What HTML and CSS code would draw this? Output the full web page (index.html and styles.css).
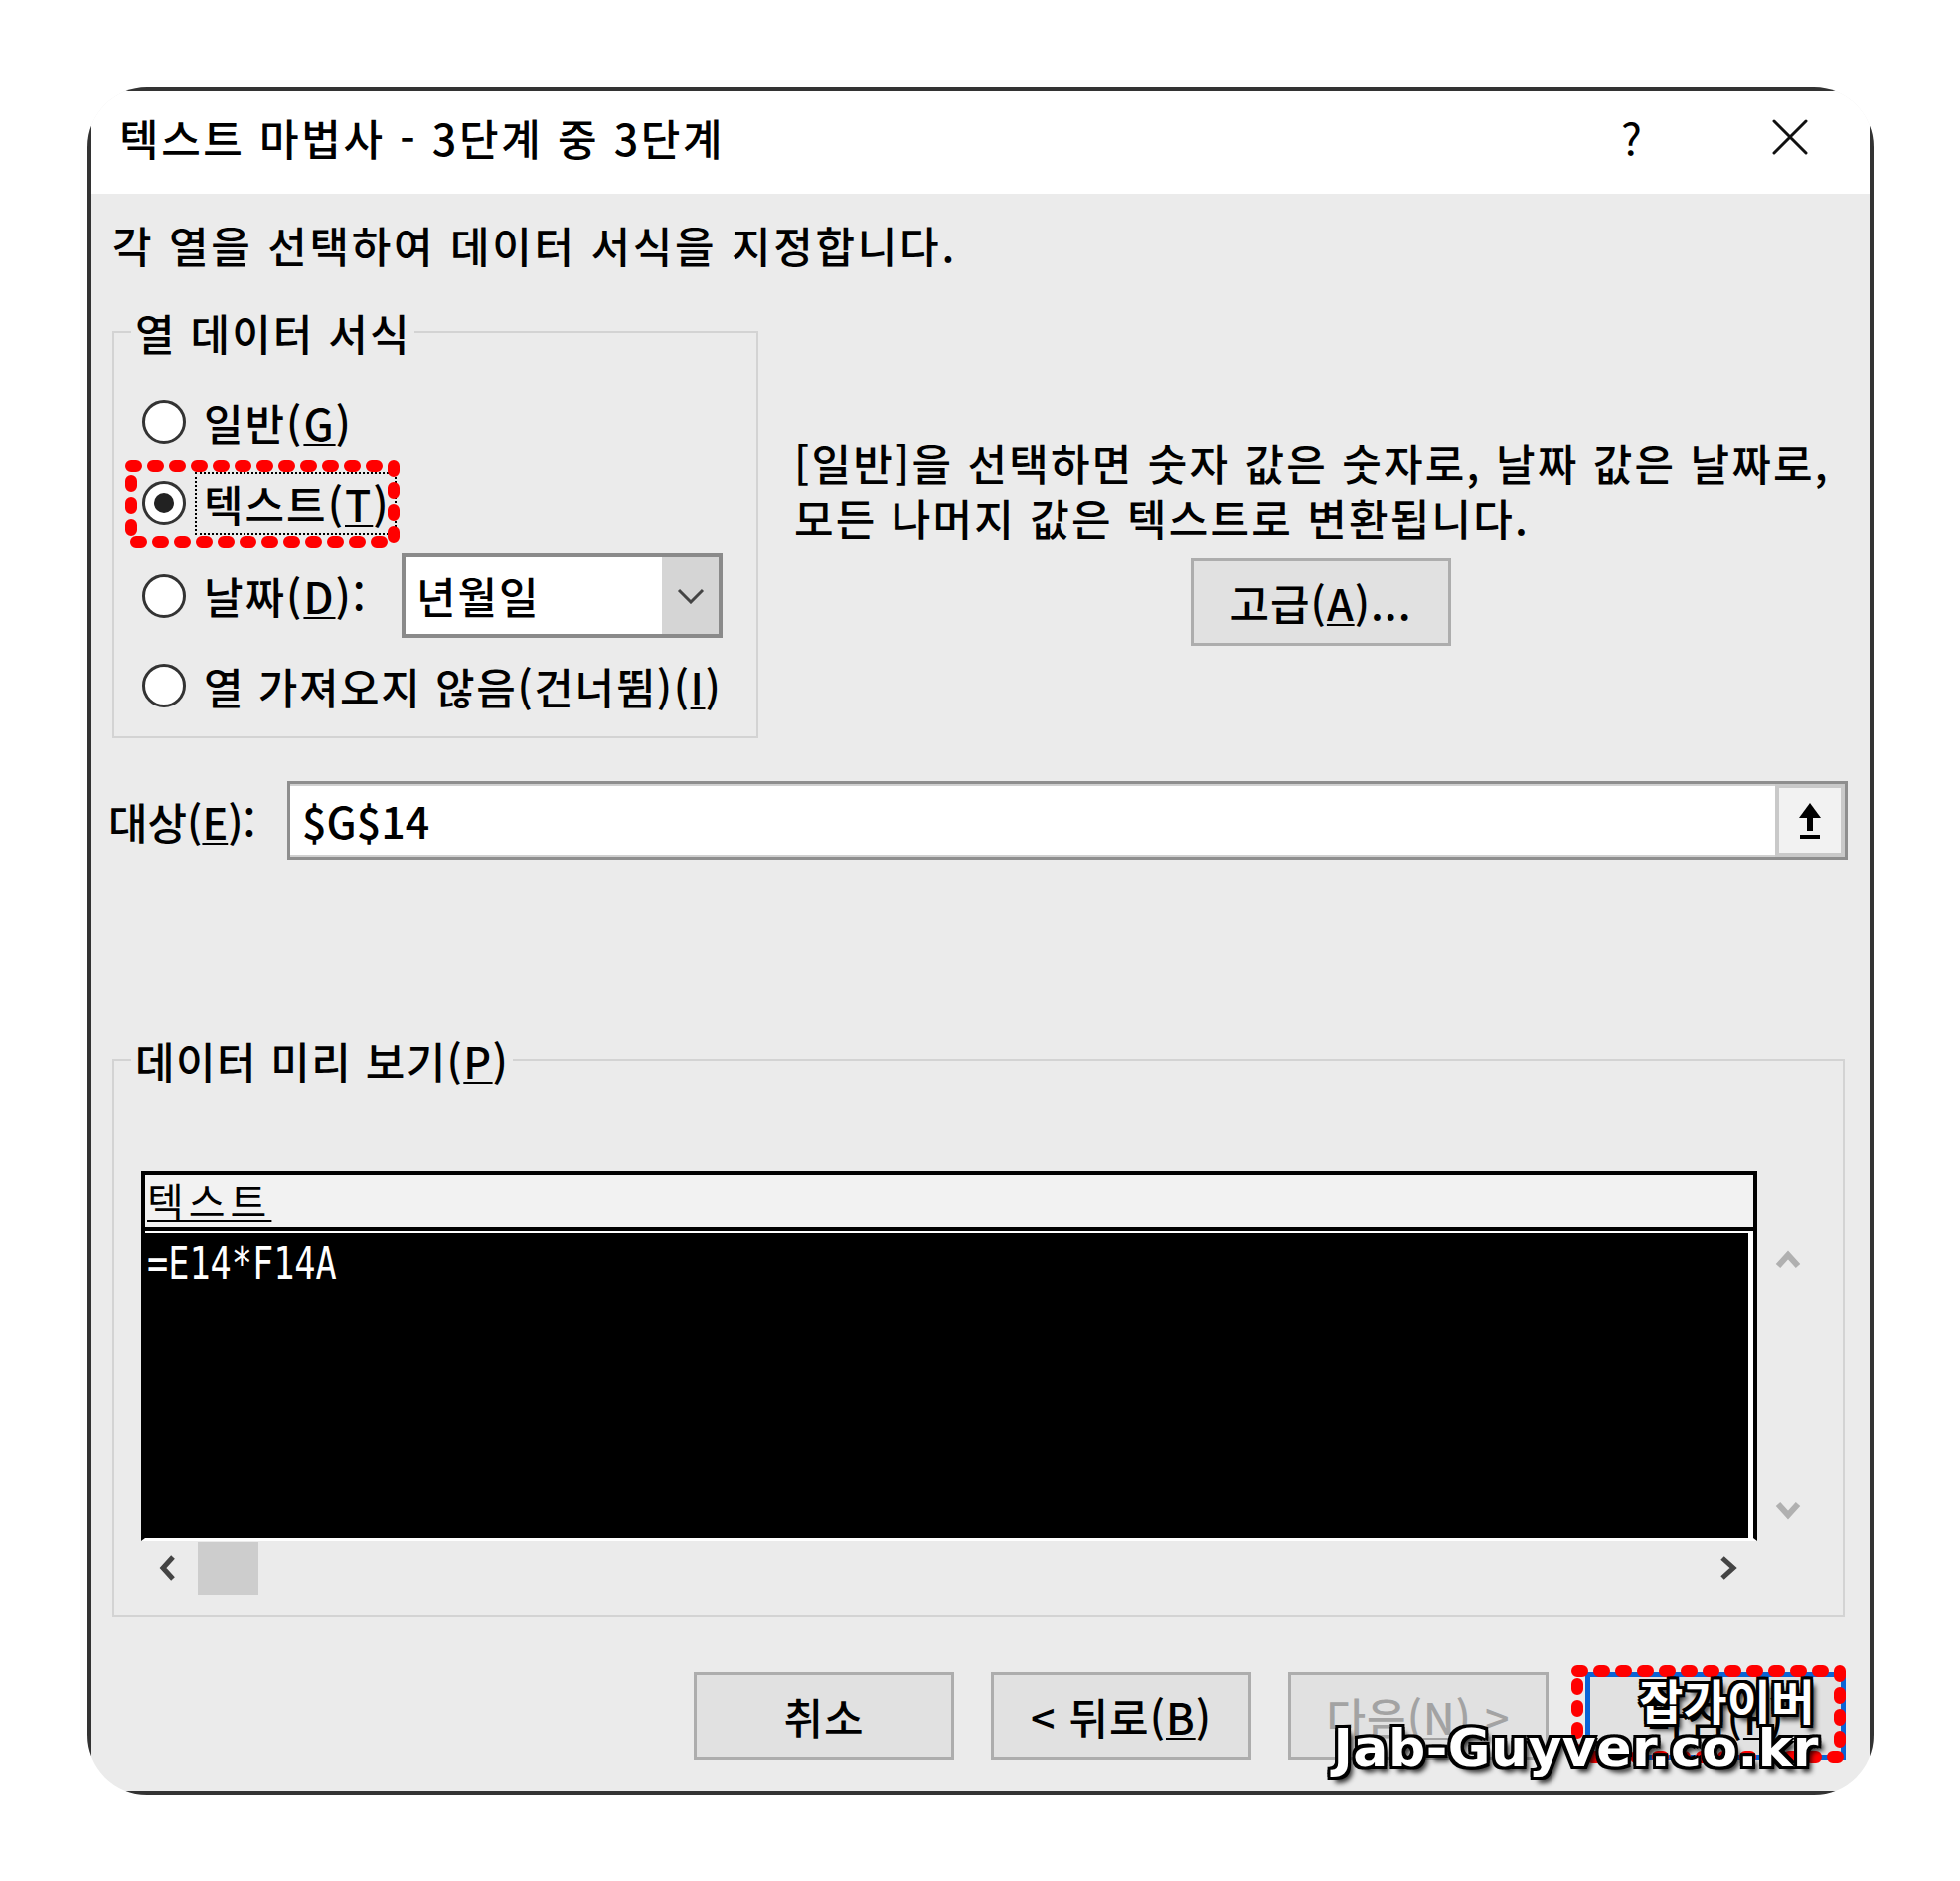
FILE: index.html
```html
<!DOCTYPE html>
<html lang="ko">
  <head>
    <meta charset="utf-8" />
    <title>텍스트 마법사 - 3단계 중 3단계</title>
    <link rel="stylesheet" href="styles.css">
  </head>
  <body>
    <div class="frame">
      <div class="window">
        <header class="titlebar">
          <span class="title">텍스트 마법사 - 3단계 중 3단계</span>
          <span class="help">?</span>
          <svg class="close" viewBox="0 0 36 36">
            <path d="M2 2L34 34M34 2L2 34" stroke="#111" stroke-width="3" stroke-linecap="round" />
          </svg>
        </header>

        <main class="content">
          <p class="intro">각 열을 선택하여 데이터 서식을 지정합니다.</p>

          <div class="format-row">
            <fieldset class="group format">
              <legend>열 데이터 서식</legend>
              <div class="option first">
                <span class="radio"></span>
                <span class="label">일반(<u>G</u>)</span>
              </div>
              <div class="option">
                <span class="radio on"></span>
                <span class="label focus">텍스트(<u>T</u>)</span>
                <svg class="mark" width="276" height="88" viewBox="0 0 276 88">
                  <rect x="6" y="6" width="264" height="76" />
                </svg>
              </div>
              <div class="option date">
                <span class="radio"></span>
                <span class="label">날짜(<u>D</u>):</span>
                <div class="combo">
                  <span class="combo-text">년월일</span>
                  <span class="combo-btn">
                    <svg width="28" height="16" viewBox="0 0 28 16">
                      <path d="M2 2L14 14L26 2" fill="none" stroke="#444" stroke-width="3" />
                    </svg>
                  </span>
                </div>
              </div>
              <div class="option skip">
                <span class="radio"></span>
                <span class="label">열 가져오지 않음(건너뜀)(<u>I</u>)</span>
              </div>
            </fieldset>

            <div class="info">
              <p class="desc">[일반]을 선택하면 숫자 값은 숫자로, 날짜 값은 날짜로,<br>모든 나머지 값은 텍스트로 변환됩니다.</p>
              <button class="btn advanced">고급(<u>A</u>)...</button>
            </div>
          </div>

          <div class="target-row">
            <span class="target-label">대상(<u>E</u>):</span>
            <div class="input">
              <span class="input-text">$G$14</span>
              <span class="pick">
                <svg width="26" height="40" viewBox="0 0 26 40">
                  <polygon points="13,2 2,17 24,17" fill="#000" />
                  <rect x="10" y="15" width="6" height="15" fill="#000" />
                  <rect x="3" y="34" width="20" height="4" fill="#000" />
                </svg>
              </span>
            </div>
          </div>

          <fieldset class="group preview">
            <legend>데이터 미리 보기(<u>P</u>)</legend>
            <div class="preview-grid">
              <div class="table">
                <div class="thead"><u>텍스트</u></div>
                <div class="tbody"><span class="cell">=E14*F14A</span></div>
              </div>
              <div class="vscroll">
                <svg width="26" height="20" viewBox="0 0 26 20">
                  <path d="M3 17L13 6L23 17" fill="none" stroke="#b0b0b0" stroke-width="6" />
                </svg>
                <svg width="26" height="20" viewBox="0 0 26 20">
                  <path d="M3 4L13 15L23 4" fill="none" stroke="#b0b0b0" stroke-width="6" />
                </svg>
              </div>
              <div class="hscroll">
                <svg width="24" height="26" viewBox="0 0 24 26">
                  <path d="M17 2L7 13L17 24" fill="none" stroke="#444" stroke-width="5" />
                </svg>
                <span class="thumb"></span>
                <svg class="next" width="24" height="26" viewBox="0 0 24 26">
                  <path d="M6 3L17 13L6 23" fill="none" stroke="#444" stroke-width="5" />
                </svg>
              </div>
            </div>
          </fieldset>

          <div class="actions">
            <button class="btn">취소</button>
            <button class="btn">&lt; 뒤로(<u>B</u>)</button>
            <button class="btn" disabled>다음(<u>N</u>) &gt;</button>
            <div class="finish-wrap">
              <button class="btn default">마침(<u>F</u>)</button>
              <svg class="mark" width="276" height="98" viewBox="0 0 276 98">
                <rect x="6" y="6" width="264" height="86" />
              </svg>
            </div>
          </div>
        </main>
      </div>

      <div class="watermark">
        <span class="wm-ko">잡가이버</span>
        <span class="wm-url">Jab-Guyver.co.kr</span>
      </div>
    </div>
  </body>
</html>
```

FILE: styles.css
```css
* {
  box-sizing: border-box;
}

html,
body {
  margin: 0;
}

body {
  width: 1972px;
  height: 1893px;
  overflow: hidden;
  background: #fff;
  font-family: "Noto Sans CJK KR", "Noto Sans", sans-serif;
  font-size: 43px;
  font-weight: 500;
  letter-spacing: 2px;
  color: #000;
}

u {
  text-decoration-thickness: 2px;
  text-underline-offset: 3px;
}

/* dialog shell */
.frame {
  position: relative;
  margin: 88px 0 0 88px;
  width: 1797px;
  height: 1718px;
  border-radius: 60px;
  overflow: hidden;
}

.window {
  display: flex;
  flex-direction: column;
  height: 100%;
  border: 4px solid #333;
  background: #ebebeb;
}

.titlebar {
  display: flex;
  align-items: center;
  flex: 0 0 103px;
  padding: 0 62px 11px 28px;
  background: #fff;
}

.title {
  line-height: 50px;
  letter-spacing: 2.6px;
  white-space: nowrap;
}

.help {
  width: 25px;
  margin-left: auto;
  margin-right: 129px;
  font-size: 44px;
  font-weight: 400;
  line-height: 1;
  letter-spacing: 0;
  text-align: center;
}

.close {
  width: 36px;
  height: 36px;
}

.content {
  flex: 1;
  padding: 0 22px 0 21px;
}

.intro {
  margin: 26px 0 0;
  line-height: 50px;
  letter-spacing: 2.7px;
  white-space: nowrap;
}

/* column format group */
.format-row {
  display: flex;
  align-items: flex-start;
  margin-top: 38px;
}

.group {
  min-width: 0;
  margin: 0;
  padding: 0;
  border: 2px solid #d3d3d3;
}

.group legend {
  margin-left: 17px;
  padding: 0 4px;
  line-height: 50px;
  white-space: nowrap;
}

.format {
  flex: 0 0 650px;
  padding-bottom: 23px;
}

.option {
  position: relative;
  display: flex;
  align-items: center;
  height: 56px;
  margin-top: 25px;
  padding-left: 28px;
}

.option.first {
  margin-top: 38px;
}

.option.date {
  height: 85px;
  margin-top: 23px;
}

.option.skip {
  margin-top: 20px;
}

.option.skip .label {
  letter-spacing: 1.6px;
}

.radio {
  display: flex;
  align-items: center;
  justify-content: center;
  flex: 0 0 44px;
  height: 44px;
  border: 3px solid #333;
  border-radius: 50%;
  background: #fff;
}

.radio.on::after {
  content: "";
  width: 20px;
  height: 20px;
  border-radius: 50%;
  background: #222;
}

.label {
  margin-left: 9px;
  padding: 0 4px 0 7px;
  border: 2px dotted transparent;
  line-height: 59px;
  white-space: nowrap;
}

.label.focus {
  border-color: #000;
}

.combo {
  display: flex;
  width: 323px;
  height: 85px;
  margin-left: auto;
  margin-right: 34px;
  border: 4px solid #8a8a8a;
  background: #fff;
}

.combo-text {
  flex: 1;
  padding-left: 11px;
  line-height: 77px;
}

.combo-btn {
  display: flex;
  align-items: center;
  justify-content: center;
  flex: 0 0 57px;
  background: #d5d5d5;
}

/* red annotation boxes */
.mark {
  position: absolute;
  z-index: 2;
  pointer-events: none;
}

.mark rect {
  fill: none;
  stroke: #f00;
  stroke-width: 12;
  stroke-linecap: round;
  stroke-dasharray: 5 17;
}

.option .mark {
  left: 11px;
  top: -15px;
}

.info {
  flex: 1;
  margin-left: 36px;
}

.desc {
  margin: 129px 0 0;
  line-height: 55px;
  letter-spacing: 2.2px;
  white-space: nowrap;
}

.btn {
  display: flex;
  align-items: center;
  justify-content: center;
  width: 262px;
  height: 88px;
  padding: 0;
  border: 3px solid #adadad;
  background: #e1e1e1;
  font: inherit;
  letter-spacing: 1px;
  color: #000;
  white-space: nowrap;
}

.btn[disabled] {
  color: #a3a3a3;
}

.advanced {
  margin: 14px auto 0;
}

/* destination */
.target-row {
  display: flex;
  align-items: center;
  height: 79px;
  margin-top: 43px;
}

.target-label {
  flex: 0 0 180px;
  margin-left: -4px;
  line-height: 50px;
  letter-spacing: 0;
  white-space: nowrap;
}

.input {
  display: flex;
  flex: 1;
  height: 79px;
  border: 3px solid #8e8e8e;
  box-shadow: inset 0 2px 0 #d0d0d0, inset 0 -2px 0 #d0d0d0;
  background: #fff;
}

.input-text {
  flex: 1;
  padding-left: 12px;
  line-height: 73px;
  letter-spacing: 0;
}

.pick {
  display: flex;
  align-items: center;
  justify-content: center;
  flex: 0 0 70px;
  border: 4px solid #c9c9c9;
  background: #f2f2f2;
}

/* data preview */
.preview {
  margin: 177px 3px 0 0;
  padding-bottom: 20px;
}

.preview legend {
  letter-spacing: 1.4px;
}

.preview-grid {
  display: grid;
  grid-template-columns: 1626px 1fr;
  grid-template-rows: 373px 54px;
  margin: 86px 0 0 27px;
}

.table {
  display: flex;
  flex-direction: column;
  border: 4px solid #000;
  border-bottom: 3px solid #fff;
  background: #000;
}

.thead {
  height: 57px;
  padding-left: 2px;
  border-bottom: 4px solid #000;
  background: #f2f2f2;
  font-size: 40px;
  font-weight: 400;
  line-height: 53px;
  letter-spacing: 5px;
}

.tbody {
  flex: 1;
  padding: 9px 0 0 2px;
  border-top: 2px solid #fff;
  border-right: 5px solid #fff;
  background: #000;
}

.cell {
  display: block;
  width: max-content;
  font-family: "DejaVu Sans Mono", monospace;
  font-size: 44px;
  font-weight: 400;
  line-height: 44px;
  letter-spacing: 0;
  color: #fff;
  transform: scaleX(0.8);
  transform-origin: left;
}

.vscroll {
  display: flex;
  flex-direction: column;
  justify-content: space-between;
  padding: 79px 0 21px 18px;
}

.hscroll {
  display: flex;
  align-items: center;
  padding: 0 17px 0 15px;
}

.thumb {
  align-self: stretch;
  width: 61px;
  margin: 1px 0 0 18px;
  background: #cdcdcd;
}

.hscroll .next {
  margin-left: auto;
}

/* bottom buttons */
.actions {
  display: flex;
  justify-content: flex-end;
  gap: 37px;
  margin: 56px 2px 0 0;
}

.finish-wrap {
  position: relative;
}

.btn.default {
  border: 5px solid #0a64d6;
}

.finish-wrap .mark {
  left: -14px;
  top: -7px;
}

.watermark {
  position: absolute;
  z-index: 3;
  top: 1599px;
  right: 55px;
  display: flex;
  flex-direction: column;
  align-items: flex-end;
  letter-spacing: 0;
  color: #fff;
  text-shadow: -3px -3px 0 #000, 3px -3px 0 #000, -3px 3px 0 #000, 3px 3px 0 #000,
    0 -3px 0 #000, 0 3px 0 #000, -3px 0 0 #000, 3px 0 0 #000, 5px 6px 5px rgba(0, 0, 0, 0.8);
}

.wm-ko {
  padding-right: 4px;
  font-size: 48px;
  font-weight: 700;
  line-height: 47px;
}

.wm-url {
  font-family: "DejaVu Sans", sans-serif;
  font-size: 52px;
  font-weight: 700;
  line-height: 50px;
  letter-spacing: 0.5px;
}
```
